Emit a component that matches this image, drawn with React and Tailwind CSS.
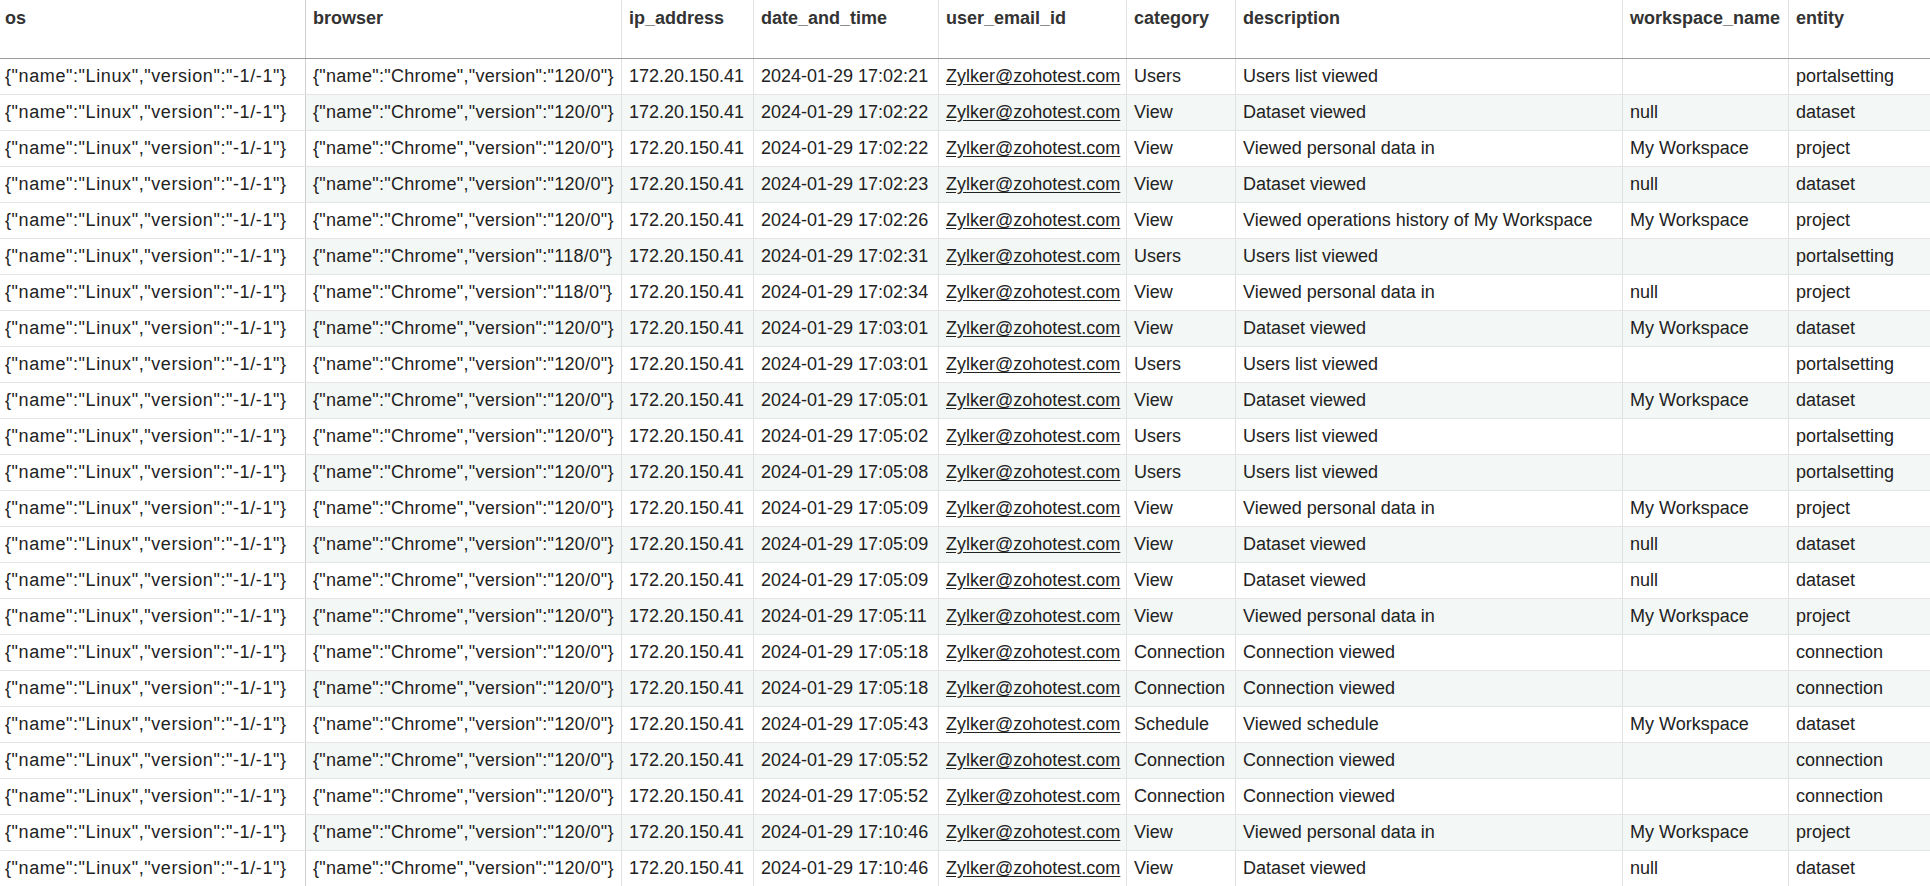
import React from "react";

const cols = [
  { key: "os", label: "os", w: "w-[306px]" },
  { key: "browser", label: "browser", w: "w-[316px]" },
  { key: "ip", label: "ip_address", w: "w-[132px]" },
  { key: "dt", label: "date_and_time", w: "w-[185px]" },
  { key: "email", label: "user_email_id", w: "w-[188px]" },
  { key: "cat", label: "category", w: "w-[109px]" },
  { key: "desc", label: "description", w: "w-[387px]" },
  { key: "ws", label: "workspace_name", w: "w-[166px]" },
  { key: "ent", label: "entity", w: "w-[180px]" },
];

const raw = [
  ["120/0", "17:02:21", "Users", "Users list viewed", "", "portalsetting"],
  ["120/0", "17:02:22", "View", "Dataset viewed", "null", "dataset"],
  ["120/0", "17:02:22", "View", "Viewed personal data in", "My Workspace", "project"],
  ["120/0", "17:02:23", "View", "Dataset viewed", "null", "dataset"],
  ["120/0", "17:02:26", "View", "Viewed operations history of My Workspace", "My Workspace", "project"],
  ["118/0", "17:02:31", "Users", "Users list viewed", "", "portalsetting"],
  ["118/0", "17:02:34", "View", "Viewed personal data in", "null", "project"],
  ["120/0", "17:03:01", "View", "Dataset viewed", "My Workspace", "dataset"],
  ["120/0", "17:03:01", "Users", "Users list viewed", "", "portalsetting"],
  ["120/0", "17:05:01", "View", "Dataset viewed", "My Workspace", "dataset"],
  ["120/0", "17:05:02", "Users", "Users list viewed", "", "portalsetting"],
  ["120/0", "17:05:08", "Users", "Users list viewed", "", "portalsetting"],
  ["120/0", "17:05:09", "View", "Viewed personal data in", "My Workspace", "project"],
  ["120/0", "17:05:09", "View", "Dataset viewed", "null", "dataset"],
  ["120/0", "17:05:09", "View", "Dataset viewed", "null", "dataset"],
  ["120/0", "17:05:11", "View", "Viewed personal data in", "My Workspace", "project"],
  ["120/0", "17:05:18", "Connection", "Connection viewed", "", "connection"],
  ["120/0", "17:05:18", "Connection", "Connection viewed", "", "connection"],
  ["120/0", "17:05:43", "Schedule", "Viewed schedule", "My Workspace", "dataset"],
  ["120/0", "17:05:52", "Connection", "Connection viewed", "", "connection"],
  ["120/0", "17:05:52", "Connection", "Connection viewed", "", "connection"],
  ["120/0", "17:10:46", "View", "Viewed personal data in", "My Workspace", "project"],
  ["120/0", "17:10:46", "View", "Dataset viewed", "null", "dataset"],
];

const rows = raw.map((r) => ({
  os: '{"name":"Linux","version":"-1/-1"}',
  browser: `{"name":"Chrome","version":"${r[0]}"}`,
  ip: "172.20.150.41",
  dt: `2024-01-29 ${r[1]}`,
  email: "Zylker@zohotest.com",
  cat: r[2],
  desc: r[3],
  ws: r[4],
  ent: r[5],
}));

export default function App() {
  return (
    <div
      className="w-[1930px] h-[886px] overflow-hidden bg-white text-[#222222] text-[18px]"
      style={{ fontFamily: '"Liberation Sans", Arial, sans-serif' }}
    >
      <div className="flex w-max h-[59px] border-b border-[#9c9c9c]">
        {cols.map((c, i) => (
          <div
            key={c.key}
            className={`${c.w} shrink-0 h-full font-bold text-[#333333] pt-[5px] ${
              i === 0 ? "pl-[5px] border-r border-[#cfcfcf]" : "pl-[7px] border-r border-[#e2e2e2]"
            }`}
          >
            {c.label}
          </div>
        ))}
      </div>
      {rows.map((r, ri) => (
        <div
          key={ri}
          className={`flex w-max h-[36px] border-b border-[#e4e4e4] ${
            ri % 2 === 1 ? "bg-[#f3f7f5]" : "bg-white"
          }`}
        >
          {cols.map((c, i) => (
            <div
              key={c.key}
              className={`${c.w} shrink-0 h-full flex items-center whitespace-nowrap overflow-hidden ${
                i === 0
                  ? "pl-[5px] bg-white border-r border-[#cfcfcf] tracking-[0.6px]"
                  : i === 1
                  ? "pl-[7px] border-r border-[#e2e2e2] tracking-[0.3px]"
                  : "pl-[7px] border-r border-[#e2e2e2]"
              }`}
            >
              {c.key === "email" ? (
                <span className="underline underline-offset-2 text-[#222222]">{r[c.key]}</span>
              ) : (
                r[c.key]
              )}
            </div>
          ))}
        </div>
      ))}
    </div>
  );
}
